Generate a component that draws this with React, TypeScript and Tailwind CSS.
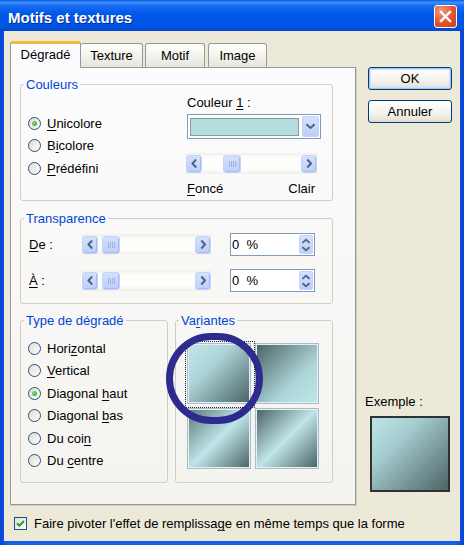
import React from "react";

const U = ({ children }: { children: React.ReactNode }) => (
  <span className="underline underline-offset-[2px] decoration-[1px]">{children}</span>
);

function Chevron({ dir, size = 9 }: { dir: "left" | "right" | "down" | "up"; size?: number }) {
  const paths: Record<string, string> = {
    left: "M5.5 1.2 L2.5 4.5 L5.5 7.8",
    right: "M3 1.2 L6 4.5 L3 7.8",
    down: "M1.2 3 L4.5 6 L7.8 3",
    up: "M1.2 6 L4.5 3 L7.8 6",
  };
  return (
    <svg width={size} height={size} viewBox="0 0 9 9">
      <path d={paths[dir]} fill="none" stroke="#4D6185" strokeWidth="2" strokeLinecap="square" />
    </svg>
  );
}

function ArrowBtn({ dir }: { dir: "left" | "right" }) {
  return (
    <div className="flex items-center justify-center w-[16px] h-[18px] rounded-[3px] border border-[#C3D3FD] bg-[linear-gradient(to_bottom,#D4E0FD,#BDCFFA)] shadow-[inset_-1px_-1px_0_#A8BDF0]">
      <Chevron dir={dir} />
    </div>
  );
}

function Thumb() {
  return (
    <div className="flex items-center justify-center gap-[1px] w-[18px] h-[18px] rounded-[3px] border border-[#C3D3FD] bg-[linear-gradient(to_bottom,#D4E0FD,#BDCFFA)] shadow-[inset_-1px_-1px_0_#A8BDF0]">
      <div className="w-[1px] h-[6px] bg-[#9DB3EC]" />
      <div className="w-[1px] h-[6px] bg-[#9DB3EC]" />
      <div className="w-[1px] h-[6px] bg-[#9DB3EC]" />
      <div className="w-[1px] h-[6px] bg-[#9DB3EC]" />
    </div>
  );
}

function HScroll({ width, thumbOffset }: { width: string; thumbOffset: string }) {
  return (
    <div
      className={`flex items-center h-[21px] px-[1px] bg-[linear-gradient(to_bottom,#F1EFE8,#FEFEFC_25%,#FEFEFC_75%,#F1EFE8)] ${width}`}
    >
      <ArrowBtn dir="left" />
      <div className={thumbOffset}>
        <Thumb />
      </div>
      <div className="flex-1" />
      <ArrowBtn dir="right" />
    </div>
  );
}

function Radio({ checked, children }: { checked?: boolean; children: React.ReactNode }) {
  return (
    <div className="flex items-center h-[22.5px]">
      <div className="w-[13px] h-[13px] rounded-full border border-[#2F4F6F] bg-[linear-gradient(135deg,#DCDCD7,#FFFFFF)] flex items-center justify-center">
        {checked && (
          <div className="w-[5px] h-[5px] rounded-full bg-[radial-gradient(circle_at_35%_35%,#7EE07E,#21A121)]" />
        )}
      </div>
      <span className="ml-[6px]">{children}</span>
    </div>
  );
}

function Spin() {
  return (
    <div className="w-[85px] h-[23px] border border-[#7F9DB9] bg-white flex items-center">
      <span className="pl-[1px] flex-1">0&nbsp;&nbsp;%</span>
      <div className="w-[14px] h-[19px] mr-[1px] rounded-[2px] border border-[#C3D3FD] bg-[linear-gradient(to_bottom,#D4E0FD,#BDCFFA)] flex flex-col items-center justify-center">
        <Chevron dir="up" size={8} />
        <Chevron dir="down" size={8} />
      </div>
    </div>
  );
}

function Legend({ children }: { children: React.ReactNode }) {
  return <legend className="ml-[3px] px-[2px] leading-[15px] text-[#0046D5]">{children}</legend>;
}

function XPButton({ children, def }: { children: React.ReactNode; def?: boolean }) {
  return (
    <div
      className={`w-[84px] h-[23px] rounded-[3px] border border-[#003C74] flex items-center justify-center bg-[linear-gradient(to_bottom,#FFFFFF,#F3F2EC_60%,#E3E0D4)] ${
        def ? "shadow-[inset_0_0_0_1px_#A8C7F0,inset_0_0_0_2px_#CEE0F8]" : "shadow-[inset_0_-2px_0_#E0DDCF]"
      }`}
    >
      {children}
    </div>
  );
}

function Tile({ bg, focus }: { bg: string; focus?: boolean }) {
  return (
    <div className={`p-[1px] ${focus ? "outline outline-1 outline-dotted outline-[#222]" : ""}`}>
      <div className="w-[64px] h-[61px] border border-[#A9BCCB] p-[1px] bg-[#E6F0F4]">
        <div className={`w-full h-full ${bg}`} />
      </div>
    </div>
  );
}

export default function App() {
  return (
    <div className="w-[464px] h-[545px] flex flex-col overflow-hidden bg-[linear-gradient(to_right,#0842D6,#1660E8_2%,#1660E8_98%,#0842D6)] font-['Liberation_Sans',Arial,sans-serif] text-[13px] text-black leading-[15px]">
      {/* Title bar */}
      <div className="shrink-0 h-[31px] flex items-center justify-between pl-[8px] pr-[7px] bg-[linear-gradient(to_bottom,#0A5CE4_0%,#3D8FFB_8%,#1A6CF2_18%,#0058E8_45%,#0055E5_80%,#0048D4_100%)]">
        <span className="mt-[3px] text-white font-bold text-[15px] [text-shadow:1px_1px_0_#0A2A8A]">Motifs et textures</span>
        <div className="mt-[1px] w-[23px] h-[23px] rounded-[3px] border border-white bg-[radial-gradient(circle_at_30%_25%,#F09A7E,#E0552F_55%,#C9401C)] flex items-center justify-center">
          <svg width="13" height="13" viewBox="0 0 13 13">
            <path d="M2 2 L11 11 M11 2 L2 11" stroke="white" strokeWidth="2.4" strokeLinecap="square" />
          </svg>
        </div>
      </div>

      {/* Body */}
      <div className="flex-1 min-h-0 mx-[4px] mb-[4px] bg-[#ECE9D8] flex">
        {/* Left column */}
        <div className="shrink-0 pl-[6px] pt-[10px] w-[352px] flex flex-col">
          {/* Tabs */}
          <div className="flex items-end h-[26px] shrink-0">
            <div className="relative z-10 mb-[-1px] h-[27px] w-[71px] bg-[#FCFCFE] border border-[#919B9C] border-b-0 border-t-[3px] border-t-[#F4B73C] rounded-t-[3px] flex items-center justify-center pb-[3px]">
              Dégradé
            </div>
            <div className="h-[24px] w-[62px] border border-[#919B9C] border-b-0 border-l-0 rounded-t-[3px] bg-[linear-gradient(to_bottom,#FFFFFF,#F1F0EA_60%,#E6E4DB)] flex items-center justify-center">
              Texture
            </div>
            <div className="ml-[2px] h-[24px] w-[60px] border border-[#919B9C] border-b-0 rounded-t-[3px] bg-[linear-gradient(to_bottom,#FFFFFF,#F1F0EA_60%,#E6E4DB)] flex items-center justify-center">
              Motif
            </div>
            <div className="ml-[3px] h-[24px] w-[59px] border border-[#919B9C] border-b-0 rounded-t-[3px] bg-[linear-gradient(to_bottom,#FFFFFF,#F1F0EA_60%,#E6E4DB)] flex items-center justify-center">
              Image
            </div>
          </div>

          {/* Panel */}
          <div className="shrink-0 w-[346px] h-[438px] border border-[#919B9C] shadow-[1px_1px_0_#D0CEBF] bg-[linear-gradient(to_bottom,#FCFCFE,#F4F3EE)] pl-[9px] pt-[9px] flex flex-col">
            {/* Couleurs */}
            <fieldset className="shrink-0 w-[313px] h-[124px] border border-[#D0D0BF] rounded-[3px]">
              <Legend>Couleurs</Legend>
              <div className="flex">
                <div className="w-[164px] pl-[7px] pt-[20px] flex flex-col">
                  <Radio checked>
                    <U>U</U>nicolore
                  </Radio>
                  <Radio>
                    B<U>i</U>colore
                  </Radio>
                  <Radio>
                    <U>P</U>rédéfini
                  </Radio>
                </div>
                <div className="flex flex-col pt-[3px]">
                  <div className="ml-[2px]">
                    Couleur <U>1</U> :
                  </div>
                  <div className="ml-[2px] mt-[4px] w-[134px] h-[25px] border border-[#7F9DB9] bg-white flex items-center pl-[2px] pr-[1px]">
                    <div className="flex-1 h-[18px] border border-[#8E9A9A] bg-[#B4DEDE]" />
                    <div className="ml-[3px] w-[17px] h-[21px] rounded-[2px] border border-[#C3D3FD] bg-[linear-gradient(to_bottom,#D4E0FD,#BDCFFA)] flex items-center justify-center">
                      <Chevron dir="down" />
                    </div>
                  </div>
                  <div className="mt-[14px]">
                    <HScroll width="w-[133px]" thumbOffset="ml-[21px]" />
                  </div>
                  <div className="mt-[7px] ml-[2px] w-[128px] flex justify-between">
                    <span>
                      <U>F</U>oncé
                    </span>
                    <span>Clair</span>
                  </div>
                </div>
              </div>
            </fieldset>

            {/* Transparence */}
            <fieldset className="shrink-0 mt-[10px] w-[313px] h-[93px] border border-[#D0D0BF] rounded-[3px]">
              <Legend>Transparence</Legend>
              <div className="pl-[8px] pt-[7px] flex flex-col gap-[13px]">
                <div className="flex items-center h-[23px]">
                  <span className="w-[52px]">
                    <U>D</U>e :
                  </span>
                  <HScroll width="w-[131px]" thumbOffset="ml-[4px]" />
                  <div className="ml-[18px]">
                    <Spin />
                  </div>
                </div>
                <div className="flex items-center h-[23px]">
                  <span className="w-[52px]">
                    <U>À</U> :
                  </span>
                  <HScroll width="w-[131px]" thumbOffset="ml-[4px]" />
                  <div className="ml-[18px]">
                    <Spin />
                  </div>
                </div>
              </div>
            </fieldset>

            {/* Bottom groups */}
            <div className="shrink-0 mt-[9px] flex gap-[7px]">
              <fieldset className="w-[148px] h-[170px] border border-[#D0D0BF] rounded-[3px]">
                <Legend>Type de dégradé</Legend>
                <div className="pl-[7px] pt-[9px] flex flex-col">
                  <Radio>
                    Hori<U>z</U>ontal
                  </Radio>
                  <Radio>
                    <U>V</U>ertical
                  </Radio>
                  <Radio checked>
                    Diagonal <U>h</U>aut
                  </Radio>
                  <Radio>
                    Diagonal <U>b</U>as
                  </Radio>
                  <Radio>
                    Du coi<U>n</U>
                  </Radio>
                  <Radio>
                    Du <U>c</U>entre
                  </Radio>
                </div>
              </fieldset>
              <fieldset className="w-[158px] h-[170px] border border-[#D0D0BF] rounded-[3px]">
                <Legend>
                  Va<U>r</U>iantes
                </Legend>
                <div className="pl-[10px] pt-[14px]">
                  <div className="relative w-fit">
                    <div className="grid grid-cols-[68px_68px] grid-rows-[65px_65px] gap-0">
                      <Tile focus bg="bg-[linear-gradient(135deg,#BFE5E8_0%,#AED6D9_35%,#4C6567_100%)]" />
                      <Tile bg="bg-[linear-gradient(135deg,#4C6567_0%,#AED6D9_65%,#BFE5E8_100%)]" />
                      <Tile bg="bg-[linear-gradient(135deg,#5E7A7C_0%,#BFE5E8_50%,#4C6567_100%)]" />
                      <Tile bg="bg-[linear-gradient(135deg,#4C6567_0%,#BFE5E8_50%,#4C6567_100%)]" />
                    </div>
                    <div className="absolute left-[-20px] top-[-9px] w-[97px] h-[91px] rounded-full border-[7px] border-[#2D2B8E] z-20" />
                  </div>
                </div>
              </fieldset>
            </div>
          </div>

          {/* Checkbox */}
          <div className="shrink-0 mt-[11px] ml-[4px] flex items-center whitespace-nowrap">
            <div className="shrink-0 w-[13px] h-[13px] border border-[#1C5180] bg-[linear-gradient(135deg,#DCDCD7,#FFFFFF)] flex items-center justify-center">
              <svg width="9" height="9" viewBox="0 0 9 9">
                <path d="M1 4.2 L3.4 6.6 L8 2" fill="none" stroke="#21A121" strokeWidth="2" />
              </svg>
            </div>
            <span className="ml-[7px]">
              Faire pivoter l'effet de remplissa<U>g</U>e en même temps que la forme
            </span>
          </div>
        </div>

        {/* Right column */}
        <div className="pl-[12px] pt-[36px] flex flex-col">
          <XPButton def>OK</XPButton>
          <div className="mt-[10px]">
            <XPButton>Annuler</XPButton>
          </div>
          <div className="mt-[271px] ml-[-3px]">Exemple :</div>
          <div className="mt-[7px] ml-[2px] w-[80px] h-[76px] border-[2px] border-[#2F3232] bg-[linear-gradient(135deg,#BDE4E8_0%,#A8D0D3_30%,#4E6466_100%)]" />
        </div>
      </div>
    </div>
  );
}
